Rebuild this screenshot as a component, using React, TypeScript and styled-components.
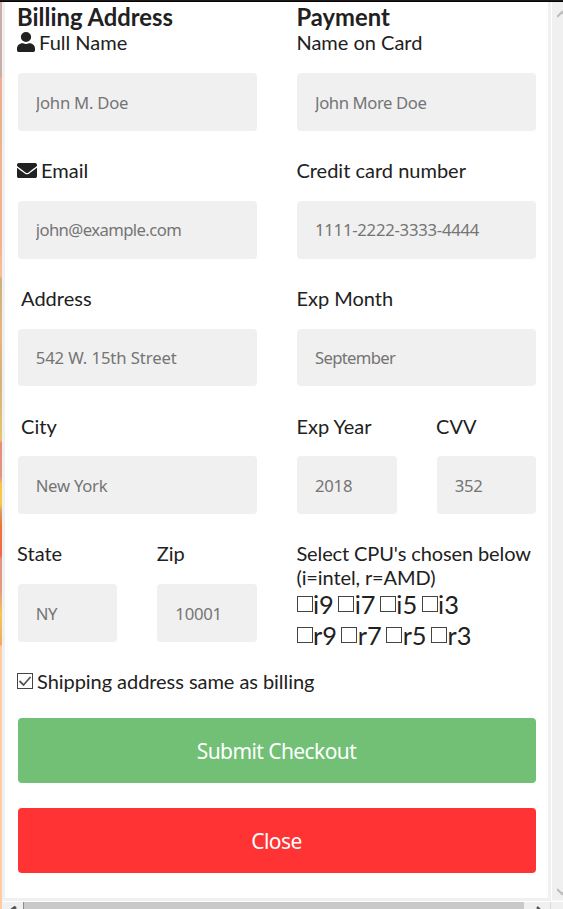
import React from "react";
import styled, { createGlobalStyle } from "styled-components";

const GlobalStyle = createGlobalStyle`
  * { box-sizing: border-box; }
  html, body { margin: 0; padding: 0; }
  body { width: 563px; height: 909px; overflow: hidden; background: #fff; color: #212121; font-family: Lato, sans-serif; }
`;

const Page = styled.div`
  width: 563px;
  height: 909px;
  display: grid;
  grid-template-columns: 2px 549px 12px;
  grid-template-rows: 2px 899px 8px;
  overflow: hidden;
`;
const TopEdge = styled.div`
  grid-column: 1 / 4;
  background: #1c1819;
  border-bottom: 1px solid #050505;
`;
const Backdrop = styled.div`
  grid-row: 2 / 4;
  grid-column: 1;
  background: linear-gradient(
    #c8aea7 0 75px, #f1ad93 75px, #e8b18c 115px, #f1b394 170px, #f4b08f 240px, #f6c09a 274px,
    #c9b17c 277px, #e6b67e 330px, #d7b07a 380px, #e3c869 438px, #e98c78 441px, #dd9783 475px,
    #f8c644 482px, #fac64b 502px, #cf9c6a 510px, #ee7633 523px, #f26650 553px,
    #e29682 558px, #e79a7f 590px, #f3c84f 612px, #f0aa60 643px, #fdcba4 644px
  );
`;
const Panel = styled.main`
  grid-row: 2;
  grid-column: 2;
  border: 3px solid #f0f0f0;
  border-top: 0;
  padding: 1.6px 11.7px 0 12.7px;
  background: #fff;
`;
const Columns = styled.div`
  display: grid;
  grid-template-columns: 1fr 1fr;
  column-gap: 40px;
`;
const Title = styled.h3`
  margin: 0 0 0 -0.6px;
  height: 26.9px;
  font-size: 23.8px;
  line-height: 26px;
  font-weight: 700;
`;
const Label = styled.label<{ $indent?: boolean }>`
  display: flex;
  align-items: center;
  gap: 4px;
  height: 24px;
  margin: 0 0 18.7px -0.6px;
  padding-left: ${(p) => (p.$indent ? "4px" : "0")};
  font-size: 20px;
  line-height: 24px;
  white-space: nowrap;
`;
const Input = styled.input<{ $tracking: number }>`
  display: block;
  width: 100%;
  height: 57.7px;
  margin-bottom: 27.3px;
  padding: 0.6px 18px 0;
  border: 0;
  border-radius: 4px;
  background: #f0f0f0;
  font-family: "Noto Sans", sans-serif;
  font-size: 16.7px;
  letter-spacing: ${(p) => p.$tracking}px;
  &::placeholder { color: #757575; opacity: 1; }
`;
const Pair = styled.div`
  display: grid;
  grid-template-columns: 1fr 1fr;
  column-gap: 40px;
`;
const UserIcon = styled.svg`
  width: 18px;
  height: 20px;
  flex: none;
`;
const MailIcon = styled.svg`
  width: 20px;
  height: 15px;
  flex: none;
`;
const Hint = styled.div`
  margin-left: -0.6px;
  font-size: 20px;
  line-height: 24px;
  letter-spacing: -0.11px;
  white-space: nowrap;
`;
const CpuLine = styled.div`
  display: flex;
  gap: 4.6px;
  height: 30.3px;
  margin-left: -0.4px;
  font-size: 25.4px;
  line-height: 30px;
`;
const CpuOption = styled.label`
  display: flex;
  align-items: center;
  gap: 0.3px;
`;
const Box = styled.span`
  display: grid;
  place-items: center;
  flex: none;
  width: 16px;
  height: 16px;
  border: 1px solid #444;
  background: #fff;
`;
const Shipping = styled.label`
  display: flex;
  align-items: center;
  gap: 4px;
  height: 24px;
  margin: 0 0 25.3px -0.7px;
  font-size: 20px;
  line-height: 24px;
  letter-spacing: -0.05px;
`;
const Button = styled.button<{ $color: string }>`
  display: block;
  width: 100%;
  height: 65px;
  margin: 0 0 25px;
  padding: 1px 1px 0 0;
  border: 0;
  border-radius: 4px;
  background: ${(p) => p.$color};
  color: #fff;
  font-family: "Noto Sans", sans-serif;
  font-size: 21px;
  letter-spacing: -0.58px;
`;
const VerticalBar = styled.div`
  grid-row: 2;
  grid-column: 3;
  display: flex;
  flex-direction: column;
  justify-content: space-between;
  border-left: 1px solid #fff;
  border-bottom: 1px solid #f6f6f6;
  background: #f0f0f0;
  padding: 7px 0 2px 5px;
`;
const BarArrow = styled.svg`
  width: 6px;
  height: 10px;
`;
const BottomBar = styled.div`
  grid-row: 3;
  grid-column: 2 / 4;
  display: grid;
  grid-template-columns: 21px 501px 26px 13px;
  border-top: 1px solid #fff;
  background: #f0f0f0;
`;
const Thumb = styled.div`
  background: #c9c9c9;
  border-left: 1px solid #8c8c8c;
`;
const BarEnd = styled.svg`
  width: 100%;
  height: 7px;
`;
const Corner = styled.div`
  border-left: 1px solid #d8d8d8;
`;

type FieldProps = { label: string; value: string; icon?: React.ReactNode; indent?: boolean; tracking?: number };

function Field({ label, value, icon, indent, tracking = -0.25 }: FieldProps) {
  return (
    <div>
      <Label $indent={indent}>{icon}{label}</Label>
      <Input placeholder={value} aria-label={label} $tracking={tracking} />
    </div>
  );
}

function CpuRow({ names }: { names: string[] }) {
  return <CpuLine>{names.map((n) => <CpuOption key={n}><Box />{n}</CpuOption>)}</CpuLine>;
}

const user = (
  <UserIcon viewBox="0 0 448 512" preserveAspectRatio="none">
    <path fill="#212121" d="M224 256a128 128 0 1 0 0-256 128 128 0 0 0 0 256zm90 32h-17a174 174 0 0 1-146 0h-17C60 288 0 348 0 422v42c0 27 21 48 48 48h352c27 0 48-21 48-48v-42c0-74-60-134-134-134z" />
  </UserIcon>
);
const mail = (
  <MailIcon viewBox="0 64 512 384" preserveAspectRatio="none">
    <path fill="#212121" d="M502 191c4-3 10 0 10 5v204c0 27-21 48-48 48H48c-27 0-48-21-48-48V196c0-5 6-8 10-5 22 18 52 40 155 115 21 15 57 48 91 48s71-33 91-48c103-75 133-97 155-115zM256 320c23 0 57-29 74-41 133-97 143-105 173-129 6-4 9-11 9-19v-19c0-27-21-48-48-48H48C21 64 0 85 0 112v19c0 8 3 15 9 19 30 24 40 32 173 129 17 12 51 41 74 41z" />
  </MailIcon>
);

export default function App() {
  return (
    <>
      <GlobalStyle />
      <Page>
        <TopEdge />
        <Backdrop />
        <Panel>
          <Columns>
            <section>
              <Title>Billing Address</Title>
              <Field label="Full Name" value="John M. Doe" icon={user} />
              <Field label="Email" value="john@example.com" icon={mail} tracking={-0.6} />
              <Field label="Address" value="542 W. 15th Street" indent tracking={-0.1} />
              <Field label="City" value="New York" indent />
              <Pair>
                <Field label="State" value="NY" />
                <Field label="Zip" value="10001" />
              </Pair>
            </section>
            <section>
              <Title>Payment</Title>
              <Field label="Name on Card" value="John More Doe" tracking={-0.42} />
              <Field label="Credit card number" value="1111-2222-3333-4444" />
              <Field label="Exp Month" value="September" tracking={-0.7} />
              <Pair>
                <Field label="Exp Year" value="2018" />
                <Field label="CVV" value="352" />
              </Pair>
              <Hint>Select CPU's chosen below<br />(i=intel, r=AMD)</Hint>
              <CpuRow names={["i9", "i7", "i5", "i3"]} />
              <CpuRow names={["r9", "r7", "r5", "r3"]} />
            </section>
          </Columns>
          <Shipping>
            <Box>
              <svg width="14" height="14" viewBox="0 0 14 14"><path d="M1.5 7l4 4 7-8" fill="none" stroke="#555" strokeWidth="1.8" /></svg>
            </Box>
            Shipping address same as billing
          </Shipping>
          <Button $color="#71c075">Submit Checkout</Button>
          <Button $color="#ff3333">Close</Button>
        </Panel>
        <VerticalBar>
          <BarArrow viewBox="0 0 6 10"><path d="M0 8l5-5 5 5" fill="none" stroke="#bdbdbd" strokeWidth="2.2" /></BarArrow>
          <BarArrow viewBox="0 0 6 10"><path d="M0 1l5 5 5-5" fill="none" stroke="#bdbdbd" strokeWidth="2.2" /></BarArrow>
        </VerticalBar>
        <BottomBar>
          <BarEnd viewBox="0 0 21 7"><path d="M14 5l-5 5M9 8l4-3" stroke="#555" strokeWidth="2.5" /></BarEnd>
          <Thumb />
          <BarEnd viewBox="0 0 26 7"><path d="M13 5l5 5" stroke="#555" strokeWidth="2.5" /></BarEnd>
          <Corner />
        </BottomBar>
      </Page>
    </>
  );
}
